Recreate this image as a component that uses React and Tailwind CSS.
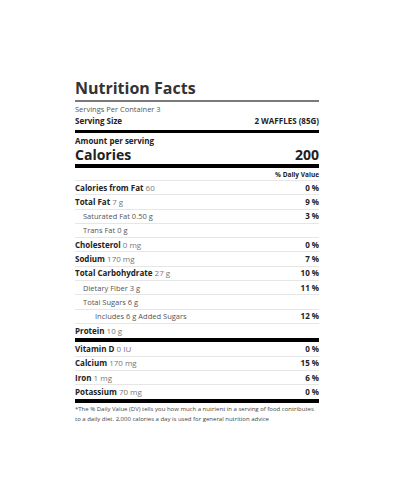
const rows = [
  { label: 'Calories from Fat', amount: '60', dv: '0 %', level: 0 },
  { label: 'Total Fat', amount: '7 g', dv: '9 %', level: 0 },
  { label: 'Saturated Fat 0.50 g', dv: '3 %', level: 1 },
  { label: 'Trans Fat 0 g', level: 1 },
  { label: 'Cholesterol', amount: '0 mg', dv: '0 %', level: 0 },
  { label: 'Sodium', amount: '170 mg', dv: '7 %', level: 0 },
  { label: 'Total Carbohydrate', amount: '27 g', dv: '10 %', level: 0 },
  { label: 'Dietary Fiber 3 g', dv: '11 %', level: 1 },
  { label: 'Total Sugars 6 g', level: 1 },
  { label: 'Includes 6 g Added Sugars', dv: '12 %', level: 2 },
  { label: 'Protein', amount: '10 g', level: 0 },
]

const vitamins = [
  { label: 'Vitamin D', amount: '0 IU', dv: '0 %' },
  { label: 'Calcium', amount: '170 mg', dv: '15 %' },
  { label: 'Iron', amount: '1 mg', dv: '6 %' },
  { label: 'Potassium', amount: '70 mg', dv: '0 %' },
]

function Row({ label, amount, dv, level = 0, last }) {
  const pad = level === 2 ? 'pl-[20px]' : level === 1 ? 'pl-[8px]' : ''
  return (
    <div className={`flex items-center justify-between h-[14.3px] ${last ? '' : 'border-b border-[#e6e6e6]'}`}>
      <span className={`${pad} whitespace-nowrap`}>
        {level === 0 ? (
          <>
            <span className="font-bold text-[#222]">{label}</span>
            {amount && <span className="text-[#777] font-normal"> {amount}</span>}
          </>
        ) : (
          <span className="text-[#555] text-[7.5px]">{label}</span>
        )}
      </span>
      {dv && <span className="font-bold text-[#222]">{dv}</span>}
    </div>
  )
}

export default function App() {
  return (
    <div className="w-[400px] h-[480px] bg-white" style={{ fontFamily: '"Open Sans", sans-serif' }}>
      <div className="ml-[75px] w-[244px] pt-[77px] text-[8px] text-[#222]">
        {/* 헤더 */}
        <h1 className="text-[16px] font-bold leading-[22px] text-[#333] pb-[1px]">Nutrition Facts</h1>
        <div className="h-[2px] bg-[#7a7a7a]" />
        <div className="text-[7.5px] text-[#555] leading-[12px] mt-[1px]">Servings Per Container 3</div>
        <div className="flex justify-between font-bold leading-[12px]">
          <span>Serving Size</span>
          <span>2 WAFFLES (85G)</span>
        </div>
        <div className="h-[3px] bg-black mt-[3px]" />

        {/* 칼로리 */}
        <div className="font-bold leading-[12px] mt-[2px]">Amount per serving</div>
        <div className="flex justify-between font-bold text-[14px] leading-[15px]">
          <span>Calories</span>
          <span>200</span>
        </div>
        <div className="h-[4px] bg-black mt-[2px]" />
        <div className="text-right font-bold text-[6.5px] h-[13px] leading-[13px] border-b border-[#e6e6e6]">% Daily Value</div>

        {rows.map((r, i) => (
          <Row key={r.label} {...r} last={i === rows.length - 1} />
        ))}
        <div className="h-[4px] bg-black" />
        {vitamins.map((r, i) => (
          <Row key={r.label} {...r} last={i === vitamins.length - 1} />
        ))}
        <div className="h-[4px] bg-black" />

        {/* 주석 */}
        <p className="text-[6px] text-[#444] leading-[10px] mt-[1px]">
          *The % Daily Value (DV) tells you how much a nutrient in a serving of food contributes to a daily diet. 2,000 calories a day is used for general nutrition advice
        </p>
      </div>
    </div>
  )
}
